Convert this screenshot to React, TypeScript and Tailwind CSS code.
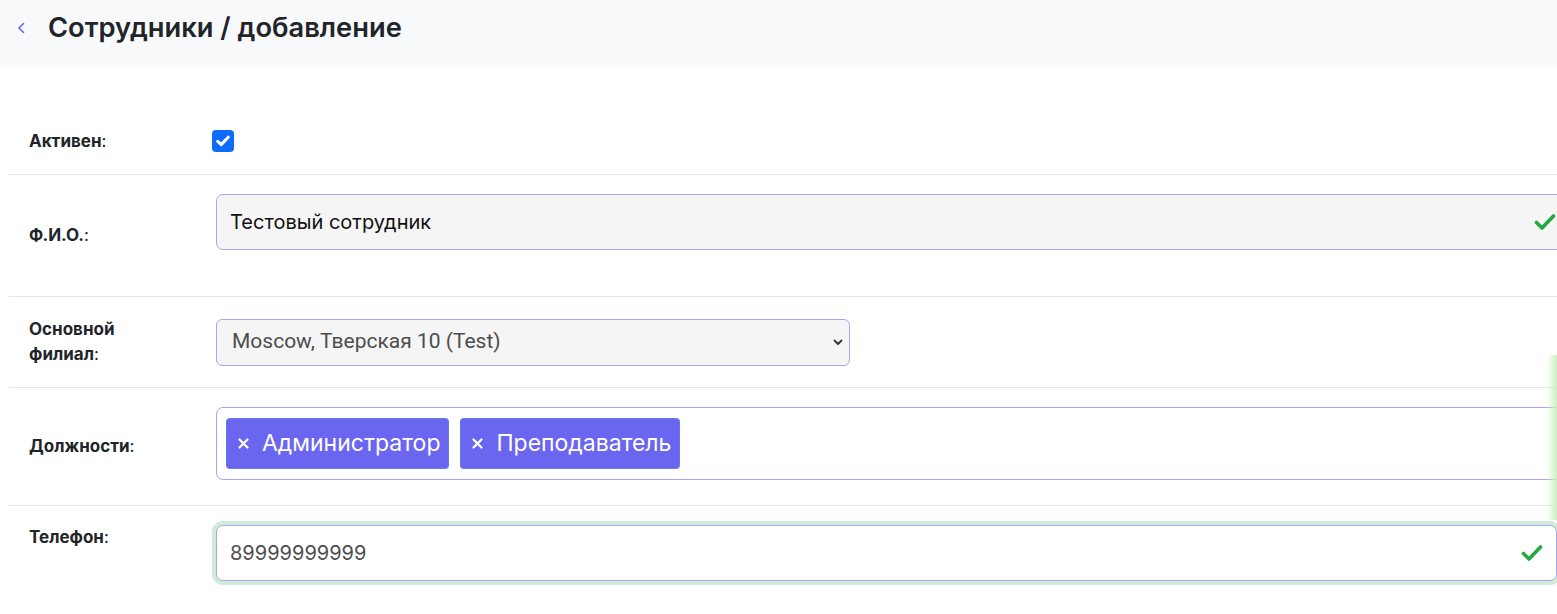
import React from "react";

const Check = ({ className = "" }: { className?: string }) => (
  <svg className={className} width="22" height="18" viewBox="0 0 22 18" fill="none">
    <path d="M2.5 9.5 L8 15 L19.5 3" stroke="#28a745" strokeWidth="3.6" strokeLinecap="round" strokeLinejoin="round" />
  </svg>
);

const Label = ({ children }: { children: React.ReactNode }) => (
  <div className="w-[187px] shrink-0 ml-5 text-[17px] leading-[25px] font-bold text-[#212529]">{children}</div>
);

const X = () => (
  <svg className="mr-[12px]" width="13" height="13" viewBox="0 0 13 13" fill="none">
    <path d="M2.5 2.5 L10.5 10.5 M10.5 2.5 L2.5 10.5" stroke="white" strokeWidth="2.3" strokeLinecap="round" />
  </svg>
);

export default function App() {
  return (
    <div className="relative w-[1557px] h-[614px] overflow-hidden bg-white" style={{ fontFamily: "Inter, 'Noto Sans', sans-serif" }}>
      <div className="h-[67px] bg-[#f8f9fb]">
        <div className="h-[56px] flex items-center">
          <svg className="ml-[17px]" width="9" height="12" viewBox="0 0 9 12" fill="none">
            <path d="M6.5 1.5 L2 6 L6.5 10.5" stroke="#6c63ff" strokeWidth="1.6" strokeLinecap="round" strokeLinejoin="round" />
          </svg>
          <h1 className="ml-[22px] text-[27.3px] font-semibold text-[#212529]">Сотрудники / добавление</h1>
        </div>
      </div>

      <div className="pt-[41px] pl-[9px]">
        {/* Активен */}
        <div className="flex items-center h-[67px] border-b border-[#e6e6e6]">
          <Label>
            Активен<span className="font-normal">:</span>
          </Label>
          <div className="w-[22px] h-[22px] -ml-[4px] -mt-[1px] rounded-[4px] bg-[#0b6cff] flex items-center justify-center">
            <svg width="14" height="12" viewBox="0 0 14 12" fill="none">
              <path d="M1.8 6.4 L5.2 9.6 L12.2 2.2" stroke="white" strokeWidth="3" strokeLinecap="round" strokeLinejoin="round" />
            </svg>
          </div>
        </div>

        {/* ФИО */}
        <div className="flex items-center h-[122px] border-b border-[#e6e6e6]">
          <Label>
            Ф.И.О.<span className="font-normal">:</span>
          </Label>
          <div className="flex-1 self-start pt-[19px] -mr-[14px]">
            <div className="h-[56px] rounded-[7px] border border-[#aaa5f0] bg-[#f5f5f5] flex items-center justify-between pl-[13px] pr-[14px]">
              <span className="text-[20px] text-[#111]">Тестовый сотрудник</span>
              <Check />
            </div>
          </div>
        </div>

        {/* Основной филиал */}
        <div className="flex items-center h-[91px] border-b border-[#e6e6e6]">
          <Label>
            Основной
            <br />
            филиал<span className="font-normal">:</span>
          </Label>
          <div className="w-[634px] h-[47px] rounded-[6px] border border-[#aaa5f0] bg-[#f5f5f5] flex items-center justify-between pl-[15px] pr-[6px]">
            <span className="text-[21px] text-[#4d4d4d]" style={{ fontFamily: "Roboto, sans-serif" }}>
              Moscow, Тверская 10 (Test)
            </span>
            <svg width="10" height="7" viewBox="0 0 10 7" fill="none">
              <path d="M1.5 1.5 L5 5 L8.5 1.5" stroke="#333" strokeWidth="1.8" strokeLinecap="round" strokeLinejoin="round" />
            </svg>
          </div>
        </div>

        {/* Должности */}
        <div className="flex items-center h-[118px] border-b border-[#e6e6e6]">
          <Label>
            Должности<span className="font-normal">:</span>
          </Label>
          <div className="flex-1 self-start pt-[19px] -mr-[14px]">
            <div className="h-[73px] rounded-[7px] border border-[#aaa5f0] bg-white flex items-center gap-[11px] pl-[9px]">
              <div className="h-[51px] rounded-[4px] bg-[#6b66f0] border border-[#5a9cf0]/40 flex items-center pl-[10px] pr-[8px] text-white text-[23px]">
                <X />
                Администратор
              </div>
              <div className="h-[51px] rounded-[4px] bg-[#6b66f0] border border-[#5a9cf0]/40 flex items-center pl-[10px] pr-[8px] text-white text-[23px]">
                <X />
                Преподаватель
              </div>
            </div>
          </div>
        </div>

        {/* Телефон */}
        <div className="flex items-start pt-[19px]">
          <div className="w-[187px] shrink-0 ml-5 text-[17px] leading-[25px] font-bold text-[#212529]">
            Телефон<span className="font-normal">:</span>
          </div>
          <div className="flex-1">
            <div className="h-[56px] rounded-[7px] border border-[#aaa5f0] bg-white shadow-[0_0_0_4px_rgba(40,167,69,0.22)] flex items-center justify-between pl-[13px] pr-[13px]">
              <span className="text-[20px] text-[#4d4d4d]">89999999999</span>
              <Check />
            </div>
          </div>
        </div>
      </div>

      <div className="absolute right-0 top-[355px] h-[165px] w-[10px] bg-gradient-to-r from-transparent to-[#c9f0c0]" />
    </div>
  );
}
